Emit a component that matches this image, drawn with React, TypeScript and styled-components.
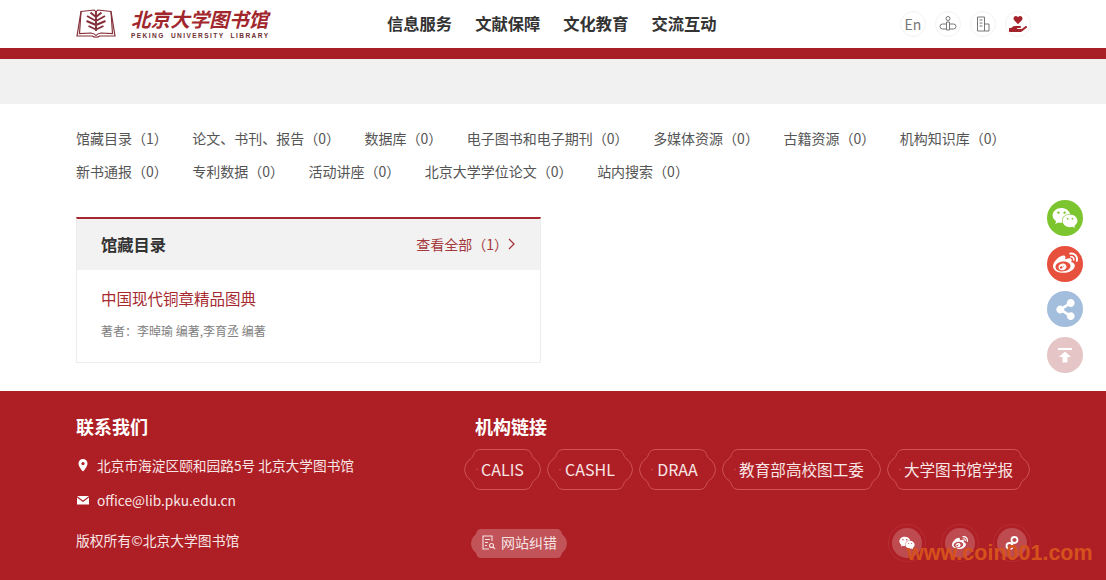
import React from "react";
import styled, { createGlobalStyle } from "styled-components";
import { FaWeixin, FaWeibo, FaShareAlt, FaHandHoldingHeart } from "react-icons/fa";

const Global = createGlobalStyle`
  html, body { margin: 0; padding: 0; background: #fff; }
  body { font-family: "Noto Sans CJK SC", "Noto Sans", sans-serif; color: #444; overflow: hidden; }
  a { color: inherit; text-decoration: none; }
`;

const Page = styled.div`
  position: relative;
  width: 1106px;
  height: 580px;
  overflow: hidden;
  display: flex;
  flex-direction: column;
`;

const Header = styled.header`
  height: 48px;
  padding: 0 76px;
  display: flex;
  align-items: center;
  background: #fff;
`;

const Logo = styled.div`
  width: 311px;
  display: flex;
  align-items: center;
  gap: 15px;
`;

const LogoWords = styled.div`
  display: flex;
  flex-direction: column;
  margin-top: -1px;
`;

const LogoCn = styled.div`
  font-size: 19.6px;
  line-height: 24px;
  font-weight: 700;
  font-style: italic;
  color: #a1272d;
  white-space: nowrap;
`;

const LogoEn = styled.div`
  font-family: "Liberation Sans", sans-serif;
  font-size: 6.6px;
  line-height: 9px;
  font-weight: 700;
  letter-spacing: 1.4px;
  color: #6e3034;
  white-space: nowrap;
  word-spacing: 3px;
`;

const Nav = styled.nav`
  display: flex;
  gap: 23px;
  width: 508px;
  margin-top: -2px;
`;

const NavItem = styled.a`
  font-size: 16.3px;
  line-height: 24px;
  font-weight: 700;
  color: #333;
  white-space: nowrap;
`;

const Tools = styled.div`
  margin-left: auto;
  margin-right: -1px;
  display: flex;
  gap: 9px;
`;

const ToolButton = styled.div<{ $accent?: boolean }>`
  width: 26px;
  height: 26px;
  border-radius: 50%;
  border: 1px solid #f3f3f3;
  box-sizing: border-box;
  display: flex;
  align-items: center;
  justify-content: center;
  font-size: 14px;
  color: ${(p) => (p.$accent ? "#a5232b" : "#777")};
`;

const RedBar = styled.div`
  height: 11px;
  background: #a81f26;
`;

const GreyBand = styled.div`
  height: 45px;
  background: #f1f1f1;
`;

const Main = styled.main`
  flex: 1;
  padding: 18px 76px 0;
  background: #fff;
`;

const Tabs = styled.div`
  display: flex;
  flex-wrap: wrap;
  width: 960px;
  column-gap: 24.5px;
`;

const Tab = styled.a`
  font-size: 14px;
  line-height: 33px;
  color: #555;
  white-space: nowrap;
`;

const Card = styled.section`
  width: 465px;
  margin-top: 29px;
  box-sizing: border-box;
  border: 1px solid #ececec;
  border-top: 2px solid #a5282e;
  background: #fff;
`;

const CardHead = styled.div`
  height: 51px;
  padding: 0 24px 2px;
  box-sizing: border-box;
  display: flex;
  align-items: center;
  justify-content: space-between;
  background: #f2f2f2;
`;

const CardTitle = styled.h3`
  margin: 0;
  font-size: 16.3px;
  font-weight: 700;
  color: #333;
`;

const MoreLink = styled.a`
  display: flex;
  align-items: center;
  font-size: 14px;
  color: #a5383c;
`;

const CardBody = styled.div`
  height: 92px;
  padding: 16px 24px 0;
  box-sizing: border-box;
`;

const BookTitle = styled.a`
  display: block;
  font-size: 15.5px;
  line-height: 24px;
  color: #a52a30;
`;

const Author = styled.div`
  margin-top: 12px;
  font-size: 12px;
  line-height: 18px;
  color: #808080;
`;

const Footer = styled.footer`
  position: relative;
  height: 189px;
  padding: 0 76px;
  box-sizing: border-box;
  background: #ae1e25;
  color: #f8e6e6;
  display: grid;
  grid-template-columns: 399px 1fr;
`;

const FooterColumn = styled.div`
  display: flex;
  flex-direction: column;
`;

const FooterTitle = styled.h4`
  margin: 22px 0 0;
  font-size: 18px;
  line-height: 26px;
  font-weight: 700;
  color: #fff;
`;

const ContactRow = styled.div<{ $gap: number }>`
  margin-top: ${(p) => p.$gap}px;
  display: flex;
  align-items: center;
  gap: 7px;
  font-size: 13.7px;
  line-height: 20px;
  white-space: nowrap;
`;

const ContactIcon = styled.svg`
  width: 14px;
  height: 14px;
  flex: none;
`;

const Copyright = styled.div`
  margin-top: 20px;
  font-size: 13.8px;
  line-height: 20px;
`;

const Chips = styled.div`
  margin: 10px 0 0 -11px;
  display: flex;
  gap: 6px;
`;

const ChipBox = styled.a<{ $w: number; $size: number }>`
  position: relative;
  width: ${(p) => p.$w}px;
  height: 41px;
  padding-bottom: 2px;
  box-sizing: border-box;
  display: flex;
  align-items: center;
  justify-content: center;
  font-size: ${(p) => p.$size}px;
  color: #f8e6e6;
  white-space: nowrap;
`;

const ChipOutline = styled.svg`
  position: absolute;
  inset: 0;
`;

const BottomRow = styled.div`
  margin-top: 38px;
  display: flex;
  justify-content: space-between;
  align-items: center;
`;

const Report = styled.a`
  position: relative;
  margin-left: -4px;
  width: 96px;
  height: 29px;
  padding-bottom: 2px;
  box-sizing: border-box;
  display: flex;
  align-items: center;
  justify-content: center;
  gap: 5px;
  font-size: 14px;
  color: #f6e3e3;
`;

const ReportShape = styled.svg`
  position: absolute;
  inset: 0;
`;

const ReportIcon = styled.svg`
  position: relative;
  flex: none;
`;

const ReportLabel = styled.span`
  position: relative;
`;

const Socials = styled.div`
  display: flex;
  gap: 22.5px;
  margin-right: 3px;
`;

const SocialDot = styled.div`
  width: 30px;
  height: 30px;
  border-radius: 50%;
  background: rgba(255, 255, 255, 0.2);
  box-shadow: 0 0 0 3px #ae1e25, 0 0 0 4px rgba(255, 255, 255, 0.07);
  display: flex;
  align-items: center;
  justify-content: center;
  color: #fff;
  font-size: 16px;
`;

const Watermark = styled.div`
  position: absolute;
  left: 907px;
  top: 148px;
  font-family: "Liberation Sans", sans-serif;
  font-size: 21.5px;
  line-height: 28px;
  font-weight: 700;
  color: #d5521d;
  white-space: nowrap;
  pointer-events: none;
`;

const SideRail = styled.div`
  position: absolute;
  left: 1047px;
  top: 200px;
  display: flex;
  flex-direction: column;
  gap: 9.6px;
`;

const SideButton = styled.a<{ $bg: string }>`
  width: 36px;
  height: 36px;
  border-radius: 50%;
  background: ${(p) => p.$bg};
  display: flex;
  align-items: center;
  justify-content: center;
  color: #fff;
  font-size: 20px;
`;

const tabs = [
  "馆藏目录（1）", "论文、书刊、报告（0）", "数据库（0）", "电子图书和电子期刊（0）",
  "多媒体资源（0）", "古籍资源（0）", "机构知识库（0）", "新书通报（0）", "专利数据（0）",
  "活动讲座（0）", "北京大学学位论文（0）", "站内搜索（0）",
];

const chips: [string, number, number][] = [
  ["CALIS", 77, 16], ["CASHL", 86, 16], ["DRAA", 77, 16], ["教育部高校图工委", 159, 15.6], ["大学图书馆学报", 143, 15.6],
];

function chipPath(w: number) {
  const r = w - 0.5;
  return `M0.5 20.5 Q1.5 13 7 9.5 Q9 8 9.500 5.500 Q11 0.5 17 0.5 H${w - 17} Q${w - 11} 0.5 ${w - 9.5} 5.5 Q${w - 9} 8 ${w - 7} 9.5 Q${w - 1.5} 13 ${r} 20.5 Q${w - 1.5} 28 ${w - 7} 31.5 Q${w - 9} 33 ${w - 9.5} 35.5 Q${w - 11} 40.5 ${w - 17} 40.5 H17 Q11 40.5 9.500 35.500 Q9 33 7 31.5 Q1.5 28 0.5 20.5 Z`;
}

function reportPath(w: number) {
  return `M0 14.5 Q0.500 9 3.500 6.500 Q5 5.500 5.500 3.500 Q6.500 0 10 0 H${w - 10} Q${w - 6.5} 0 ${w - 5.5} 3.5 Q${w - 5} 5.5 ${w - 3.5} 6.5 Q${w - 0.5} 9 ${w} 14.5 Q${w - 0.5} 20 ${w - 3.5} 22.5 Q${w - 5} 23.5 ${w - 5.5} 25.5 Q${w - 6.5} 29 ${w - 10} 29 H10 Q6.500 29 5.500 25.500 Q5 23.500 3.500 22.500 Q0.500 20 0 14.500 Z`;
}

function Chip({ label, w, size }: { label: string; w: number; size: number }) {
  return (
    <ChipBox $w={w} $size={size}>
      <ChipOutline width={w} height={41} viewBox={`0 0 ${w} 41`} fill="none">
        <path d={chipPath(w)} stroke="#cf5257" strokeWidth="1" />
        <circle cx="13" cy="20.5" r="0.8" fill="#cf5257" />
      </ChipOutline>
      {label}
    </ChipBox>
  );
}

function BookLogo() {
  return (
    <svg width="40" height="30" viewBox="0 0 40 30" fill="none" stroke="#84303a" strokeWidth="1.2">
      <path d="M5 2.500 L18 1 Q20 2 20 4 Q20 2 22 1 L35 2.500 L39 27 L24 27 Q20 29.500 16 27 L1 27 Z" />
      <path d="M5 2.500 L3.500 24.500 L15 24 Q18.500 24.500 20 26.500 Q21.500 24.500 25 24 L36.500 24.500 L35 2.500" />
      <path d="M20 2 V22 M20 8 L14.500 3.500 M20 8 L25.500 3.500 M20 12 L11 7 M20 12 L29 7 M20 16 L10.500 12 M20 16 L29.500 12 M20 20.500 L12.500 17 M20 20.500 L27.500 17" strokeWidth="1.900" />
    </svg>
  );
}

export default function App() {
  return (
    <Page>
      <Global />
      <Header>
        <Logo>
          <BookLogo />
          <LogoWords>
            <LogoCn>北京大学图书馆</LogoCn>
            <LogoEn>PEKING UNIVERSITY LIBRARY</LogoEn>
          </LogoWords>
        </Logo>
        <Nav>
          <NavItem>信息服务</NavItem>
          <NavItem>文献保障</NavItem>
          <NavItem>文化教育</NavItem>
          <NavItem>交流互动</NavItem>
        </Nav>
        <Tools>
          <ToolButton>En</ToolButton>
          <ToolButton>
            <svg width="18" height="18" viewBox="0 0 18 18" fill="none" stroke="#777" strokeWidth="1">
              <circle cx="9" cy="3.500" r="2" />
              <path d="M7.500 7 H10.500 V15 H7.500 Z M7.500 9 H3.500 A2.500 2.500 0 0 0 3.500 14 H7.500 M10.500 9 H14.500 A2.500 2.500 0 0 1 14.500 14 H10.500" />
            </svg>
          </ToolButton>
          <ToolButton>
            <svg width="18" height="18" viewBox="0 0 18 18" fill="none" stroke="#777" strokeWidth="1">
              <path d="M3.500 16 V2 H10.500 V16 Z M10.500 9 H15 V16 H10.500 M5.500 5 H8.500 M5.500 8 H8.500 M5.500 11 H8.500" />
            </svg>
          </ToolButton>
          <ToolButton $accent>
            <FaHandHoldingHeart size={18} />
          </ToolButton>
        </Tools>
      </Header>
      <RedBar />
      <GreyBand />
      <Main>
        <Tabs>
          {tabs.map((t) => (
            <Tab key={t}>{t}</Tab>
          ))}
        </Tabs>
        <Card>
          <CardHead>
            <CardTitle>馆藏目录</CardTitle>
            <MoreLink>
              查看全部（1）
              <svg width="8" height="12" viewBox="0 0 8 12" fill="none" stroke="#a5383c" strokeWidth="1.300">
                <path d="M1 1 L6 6 L1 11" />
              </svg>
            </MoreLink>
          </CardHead>
          <CardBody>
            <BookTitle>中国现代铜章精品图典</BookTitle>
            <Author>著者：李晫瑜 编著,李育丞 编著</Author>
          </CardBody>
        </Card>
      </Main>
      <Footer>
        <FooterColumn>
          <FooterTitle>联系我们</FooterTitle>
          <ContactRow $gap={16}>
            <ContactIcon viewBox="0 0 14 14">
              <path fill="#fff" fillRule="evenodd" d="M7 1a4.500 4.500 0 0 0-4.500 4.500C2.500 9 7 13.500 7 13.500S11.500 9 11.500 5.500A4.500 4.500 0 0 0 7 1Zm0 3a1.600 1.600 0 1 1 0 3.200A1.600 1.600 0 0 1 7 4Z" />
            </ContactIcon>
            北京市海淀区颐和园路5号 北京大学图书馆
          </ContactRow>
          <ContactRow $gap={15}>
            <ContactIcon viewBox="0 0 14 14">
              <path fill="#fff" d="M1 3h12L7 7.500 1 3Zm0 1.400V11.500h12V4.400L7 9 1 4.400Z" />
            </ContactIcon>
            office@lib.pku.edu.cn
          </ContactRow>
          <Copyright>版权所有©北京大学图书馆</Copyright>
        </FooterColumn>
        <FooterColumn>
          <FooterTitle>机构链接</FooterTitle>
          <Chips>
            {chips.map(([label, w, size]) => (
              <Chip key={label} label={label} w={w} size={size} />
            ))}
          </Chips>
          <BottomRow>
            <Report>
              <ReportShape width={96} height={29} viewBox="0 0 96 29">
                <path d={reportPath(96)} fill="rgba(255,255,255,0.24)" />
              </ReportShape>
              <ReportIcon width="15" height="15" viewBox="0 0 15 15" fill="none" stroke="#f6e3e3" strokeWidth="1.100">
                <path d="M11 6 V1 H2 V14 H8 M4 4.500 H9 M4 7.500 H7 M4 10.500 H6" />
                <circle cx="10.500" cy="10.500" r="2" />
                <path d="M12 12 L14 14" />
              </ReportIcon>
              <ReportLabel>网站纠错</ReportLabel>
            </Report>
            <Socials>
              <SocialDot><FaWeixin /></SocialDot>
              <SocialDot><FaWeibo /></SocialDot>
              <SocialDot>
                <svg width="18" height="18" viewBox="0 0 18 18" fill="none" stroke="#fff" strokeWidth="1.800">
                  <circle cx="11.500" cy="6" r="3" />
                  <circle cx="6.500" cy="12" r="3" />
                </svg>
              </SocialDot>
            </Socials>
          </BottomRow>
        </FooterColumn>
        <Watermark>www.coin001.com</Watermark>
      </Footer>
      <SideRail>
        <SideButton $bg="#7cc52f"><FaWeixin size={26} /></SideButton>
        <SideButton $bg="#e8503e"><FaWeibo size={25} /></SideButton>
        <SideButton $bg="#a3bddc"><FaShareAlt size={21} /></SideButton>
        <SideButton $bg="#e5c5c5">
          <svg width="18" height="18" viewBox="0 0 18 18" fill="#fff">
            <path d="M2 2 H16 V4 H2 Z M9 5.500 L15 11 H11.500 V16.500 H6.500 V11 H3 Z" />
          </svg>
        </SideButton>
      </SideRail>
    </Page>
  );
}
